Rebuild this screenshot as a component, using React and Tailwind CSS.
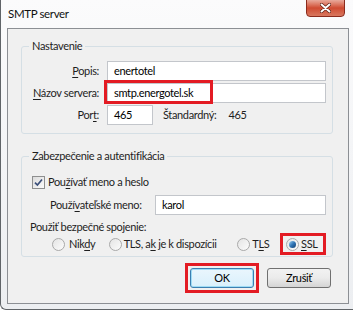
import React from 'react'

const font = { fontFamily: 'Lato, "Noto Sans", sans-serif' }

function Key({ children }) {
  return <span className="underline underline-offset-2 decoration-1">{children}</span>
}

function Radio({ checked }) {
  return (
    <span className="w-[13px] h-[13px] rounded-full border border-[#a9a9a9] bg-gradient-to-br from-[#e4e4e4] to-[#fcfcfc] flex items-center justify-center shrink-0">
      {checked && <span className="w-[7px] h-[7px] rounded-full bg-gradient-to-br from-[#9fd4f2] via-[#2f74b5] to-[#163f6e]" />}
    </span>
  )
}

function Field({ value, className = '' }) {
  return (
    <div className={`h-[20px] bg-white border border-[#c3c6cb] flex items-center px-[6px] text-black ${className}`}>
      {value}
    </div>
  )
}

export default function App() {
  return (
    <div className="w-[353px] h-[311px] overflow-hidden bg-white text-[11px] tracking-[-0.35px] leading-4 text-[#1e1e1e] whitespace-nowrap" style={font}>
      <div className="w-[362px] h-[310px] flex flex-col border-l border-b border-[#606468] rounded-bl-[6px] bg-gradient-to-b from-[#fbfbfc] to-[#eceef1]">
        {/* title bar */}
        <div className="h-[28px] flex items-start justify-between">
          <span className="pl-[7px] pt-[6px] text-[11.5px] text-[#111]">SMTP server</span>
          <div className="mr-[17px] -mt-px w-[39px] h-[18px] rounded-b-[4px] border border-[#8b2b1d] bg-gradient-to-b from-[#e8a99b] via-[#cf4a31] to-[#d8775f] flex items-center justify-center">
            <svg width="11" height="10" viewBox="0 0 11 10">
              <path d="M1.5 1.5 L9.5 8.5 M9.5 1.5 L1.5 8.5" stroke="#5a1d12" strokeWidth="3.4" strokeLinecap="round" />
              <path d="M1.5 1.5 L9.5 8.5 M9.5 1.5 L1.5 8.5" stroke="#ffffff" strokeWidth="2" strokeLinecap="round" />
            </svg>
          </div>
        </div>

        {/* content */}
        <div className="ml-[6px] w-[342px] h-[276px] border border-[#8c8f94] bg-[#f0f0f0] pl-[13px] pr-[15px] flex flex-col">
          <fieldset className="min-w-0 mt-[9px] border border-[#d5dfe5] rounded-[3px] pl-px pr-[6px] pb-[8px]">
            <legend className="ml-[6px] px-[3px]">Nastavenie</legend>
            <div className="mt-[7px] flex flex-col gap-[2px]">
              <div className="flex items-center">
                <span className="w-[76px] text-right"><Key>P</Key>opis:</span>
                <Field value="enertotel" className="ml-[8px] flex-1" />
              </div>
              <div className="flex items-center">
                <span className="w-[76px] text-right"><Key>N</Key>ázov servera:</span>
                <div className="ml-[8px] flex-1 relative">
                  <Field value="smtp.energotel.sk" />
                  <div className="absolute -left-[3px] -top-[3px] w-[109px] h-[24px] border-[3px] border-[#e31b23]" />
                </div>
              </div>
              <div className="flex items-center">
                <span className="w-[76px] text-right">Por<Key>t</Key>:</span>
                <Field value="465" className="ml-[8px] w-[46px]" />
                <span className="ml-[10px]">Štandardný:</span>
                <span className="ml-[12px]">465</span>
              </div>
            </div>
          </fieldset>

          <fieldset className="min-w-0 mt-[14px] border border-[#d5dfe5] rounded-[3px] pl-px pr-[6px] pb-[1px]">
            <legend className="ml-[6px] px-[3px]">Zabezpečenie a autentifikácia</legend>
            <div className="mt-[10px] pl-[9px] flex items-center">
              <span className="w-[13px] h-[13px] shrink-0 border border-[#8e8f8f] bg-gradient-to-br from-[#dcdcdc] to-[#fbfbfb] flex items-center justify-center">
                <svg width="9" height="9" viewBox="0 0 9 9">
                  <path d="M1 4.6 L3.4 7 L8 1.5" fill="none" stroke="#3b4f7a" strokeWidth="1.7" />
                </svg>
              </span>
              <span className="ml-[3px]">Pou<Key>ž</Key>ívať meno a heslo</span>
            </div>
            <div className="mt-[5px] pl-[27px] flex items-center">
              <span className="w-[101px] shrink-0">Použí<Key>v</Key>ateľské meno:</span>
              <Field value="karol" className="ml-[4px] flex-1" />
            </div>
            <div className="mt-[4px] pl-[7px]">Použiť bezpečné spojenie:</div>
            <div className="-mt-[2px] pl-[29px] flex items-center">
              <Radio />
              <span className="ml-[4px] w-[28px]">Nik<Key>d</Key>y</span>
              <span className="ml-[12px]"><Radio /></span>
              <span className="ml-[2px] w-[99px]">TLS, a<Key>k</Key> je k dispozícii</span>
              <span className="ml-[16px]"><Radio /></span>
              <span className="ml-[2px] w-[22px]">T<Key>L</Key>S</span>
              <span className="ml-[6px] h-[22px] border-[3px] border-[#e31b23] flex items-center pl-[3px] pr-[4px]">
                <Radio checked />
                <span className="ml-[2px] w-[18px]"><Key>S</Key>SL</span>
              </span>
            </div>
          </fieldset>

          <div className="mt-[6px] flex items-center justify-end pr-[2px]">
            <div className="border-[3px] border-[#e31b23] p-[2px]">
              <button className="w-[64px] h-[20px] rounded-[3px] border border-[#3c7fb1] shadow-[inset_0_0_0_1px_#9fdcf5] bg-gradient-to-b from-[#eaf6fd] to-[#d9f0fc] text-black">OK</button>
            </div>
            <button className="ml-[8px] w-[64px] h-[20px] rounded-[3px] border border-[#707070] bg-gradient-to-b from-[#f2f2f2] via-[#ebebeb] to-[#d4d4d4] text-black">Zrušiť</button>
          </div>
        </div>
      </div>
    </div>
  )
}
